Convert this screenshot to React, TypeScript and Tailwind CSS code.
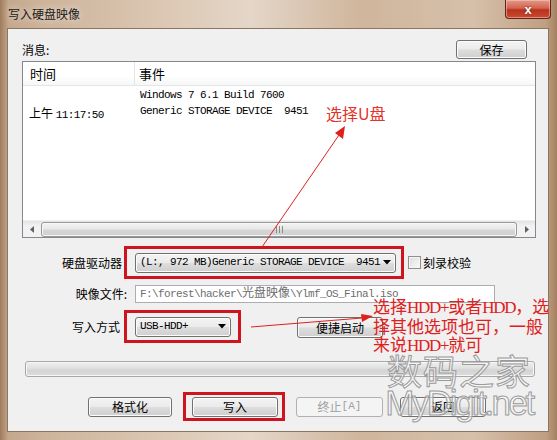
const mono = "font-['Liberation_Mono','Noto_Sans_CJK_SC',monospace] text-[11px] tracking-[-0.6px]";
const lat = "font-['Liberation_Serif',serif] tracking-[-1.3px]";

function WinButton({ children, className = "", disabled = false }: { children: React.ReactNode; className?: string; disabled?: boolean }) {
  return (
    <div
      className={
        "flex items-center justify-center rounded-[3px] border text-[12px] leading-none " +
        (disabled
          ? "border-[#adb2b5] bg-[#f4f4f4] text-[#a0a0a0] "
          : "border-[#707070] bg-[linear-gradient(180deg,#f4f4f4_0%,#ebebeb_48%,#dddddd_52%,#cfcfcf_100%)] text-black shadow-[inset_0_0_0_1px_#fcfcfc] ") +
        className
      }
    >
      {children}
    </div>
  );
}

function Combo({ children, className = "" }: { children: React.ReactNode; className?: string }) {
  return (
    <div
      className={
        "flex items-center justify-between rounded-[3px] border border-[#707070] bg-[linear-gradient(180deg,#f4f4f4_0%,#ebebeb_48%,#dddddd_52%,#cfcfcf_100%)] shadow-[inset_0_0_0_1px_#fcfcfc] pl-[4px] pr-[4px] " +
        className
      }
    >
      <span className={mono + " whitespace-pre text-black"}>{children}</span>
      <svg width="8" height="5" viewBox="0 0 8 5">
        <path d="M0 0 L8 0 L4 4.5 Z" fill="#000" />
      </svg>
    </div>
  );
}

export default function App() {
  return (
    <div className="relative w-[557px] h-[440px] overflow-hidden flex flex-col font-['Noto_Sans_CJK_SC',sans-serif] bg-[linear-gradient(90deg,#9f7b5c_0%,#c4a88d_1.5%,#cdb49b_8%,#dcc8b4_30%,#e4d6c8_45%,#cfb59c_65%,#d6c0aa_85%,#c09f82_98%,#a3805f_100%)]">
      {/* Title bar */}
      <div className="h-[28px] flex items-start justify-between">
        <div className="ml-[8px] mt-[5px] text-[12px] leading-[18px] text-[#1a1a1a] [text-shadow:0_0_6px_#f2e9df]">写入硬盘映像</div>
        <div className="mr-[6px] w-[46px] h-[19px] rounded-b-[4px] border border-t-0 border-[#5e2418] bg-[linear-gradient(180deg,#e09a8a_0%,#d4634f_45%,#b8321e_55%,#c94b33_100%)] flex items-center justify-center shadow-[inset_0_0_0_1px_rgba(255,210,200,0.5)]">
          <span className="text-white font-bold text-[13px] leading-none font-['Liberation_Sans',sans-serif] [text-shadow:0_0_2px_#5a1a10]">x</span>
        </div>
      </div>

      {/* Client area */}
      <div className="ml-[7px] mr-[8px] h-[404px] bg-[#f0f0f0] border border-[#8b7662] flex flex-col">
        {/* 消息 row */}
        <div className="mt-[11px] pl-[14px] pr-[21px] flex items-center justify-between h-[19px]">
          <span className="text-[12px] text-black leading-none">消息:</span>
          <WinButton className="w-[71px] h-[19px]">保存</WinButton>
        </div>

        {/* List view */}
        <div className="mt-[2px] ml-[14px] w-[514px] h-[177px] border border-[#828790] bg-white flex flex-col">
          <div className="h-[24px] flex border-b border-[#e5e5e5] bg-[linear-gradient(180deg,#ffffff_0%,#ffffff_60%,#f6f7f8_100%)]">
            <div className="w-[112px] border-r border-[#e5e5e5] flex items-center pl-[7px] text-[13px] text-black">时间</div>
            <div className="flex-1 flex items-center pl-[4px] text-[13px] text-black">事件</div>
          </div>
          <div className="flex-1 pt-[1px]">
            <div className="h-[16px] flex items-center">
              <div className="w-[112px]" />
              <div className={mono + " pl-[5px] text-black whitespace-pre"}>Windows 7 6.1 Build 7600</div>
            </div>
            <div className="h-[16px] flex items-center">
              <div className="w-[112px] pl-[6px] text-black whitespace-pre">
                <span className="text-[12px]">上午 </span>
                <span className={mono}>11:17:50</span>
              </div>
              <div className={mono + " pl-[5px] text-black whitespace-pre"}>Generic STORAGE DEVICE  9451</div>
            </div>
          </div>
          {/* Horizontal scrollbar */}
          <div className="h-[17px] flex items-stretch bg-[linear-gradient(180deg,#e3e3e3_0%,#f2f2f2_30%,#f2f2f2_100%)] border-t border-[#f0f0f0]">
            <div className="w-[17px] flex items-center justify-center">
              <svg width="4" height="7" viewBox="0 0 4 7"><path d="M4 0 L0 3.5 L4 7 Z" fill="#606060" /></svg>
            </div>
            <div className="flex-1 flex items-center px-[1px]">
              <div className="h-[15px] w-full rounded-[3px] border border-[#979797] bg-[linear-gradient(180deg,#f3f3f3_0%,#e8e8e8_45%,#d6d6d6_55%,#cfcfcf_100%)] flex items-center justify-center shadow-[inset_0_0_0_1px_#f8f8f8]">
                <div className="flex gap-[2px]">
                  <div className="w-[1px] h-[7px] bg-[#8a8a8a]" />
                  <div className="w-[1px] h-[7px] bg-[#8a8a8a]" />
                  <div className="w-[1px] h-[7px] bg-[#8a8a8a]" />
                </div>
              </div>
            </div>
            <div className="w-[17px] flex items-center justify-center">
              <svg width="4" height="7" viewBox="0 0 4 7"><path d="M0 0 L4 3.5 L0 7 Z" fill="#606060" /></svg>
            </div>
          </div>
        </div>

        {/* Drive row */}
        <div className="mt-[8px] flex items-center">
          <div className="w-[116px] pr-[2px] text-right text-[12px] text-black">硬盘驱动器</div>
          <div className="w-[280px] h-[33px] border-[3px] border-[#d0141f] flex items-center pl-[8px]">
            <Combo className="w-[261px] h-[20px]">(L:, 972 MB)Generic STORAGE DEVICE  9451</Combo>
          </div>
          <div className="ml-[4px] w-[13px] h-[13px] border border-[#8f8f8f] bg-[linear-gradient(135deg,#dcdcdc_0%,#fbfbfb_100%)] shadow-[inset_0_0_0_1px_#f4f4f4]" />
          <span className="ml-[2px] text-[12px] text-black">刻录校验</span>
        </div>

        {/* Image file row */}
        <div className="mt-[6px] flex items-center">
          <div className="w-[119px] text-right text-[12px] text-black">映像文件:</div>
          <div className="ml-[8px] w-[360px] h-[18px] border border-[#abadb3] bg-white flex items-center pl-[4px] overflow-hidden">
            <span className={mono + " whitespace-pre text-[#6d6d6d]"}>
              F:\forest\hacker\<span className="text-[12px] tracking-normal">光盘映像</span>\Ylmf_OS_Final.iso
            </span>
          </div>
        </div>

        {/* Write mode row */}
        <div className="mt-[7px] flex items-center">
          <div className="w-[116px] pr-[4px] text-right text-[12px] text-black">写入方式</div>
          <div className="w-[117px] h-[33px] border-[3px] border-[#d0141f] flex items-center pl-[8px]">
            <Combo className="w-[96px] h-[20px]">USB-HDD+</Combo>
          </div>
          <WinButton className="ml-[56px] w-[86px] h-[21px] mt-[2px]">便捷启动</WinButton>
        </div>

        {/* Progress bar */}
        <div className="mt-[18px] ml-[17px] w-[510px] h-[16px] rounded-[3px] border border-[#a7a7a7] bg-[linear-gradient(180deg,#f0f0f0_0%,#e2e2e2_40%,#d4d4d4_60%,#dcdcdc_100%)] shadow-[inset_0_0_0_1px_#f6f6f6]" />

        {/* Buttons row */}
        <div className="mt-[15px] flex items-center">
          <WinButton className="ml-[80px] w-[84px] h-[20px]">格式化</WinButton>
          <div className="ml-[11px] w-[102px] h-[29px] border-[3px] border-[#d0141f] flex items-center pl-[6px]">
            <WinButton className="w-[86px] h-[20px]">写入</WinButton>
          </div>
          <WinButton disabled className="ml-[11px] w-[87px] h-[20px]">
            终止<span className="font-['Liberation_Mono',monospace] text-[11px]">[A]</span>
          </WinButton>
          <WinButton className="ml-[17px] w-[86px] h-[20px] border-[#303030]">返回</WinButton>
        </div>
      </div>

      {/* Watermark */}
      <div className="absolute left-[384px] top-[350px] w-[150px] flex flex-col items-center pointer-events-none">
        <div className="text-[35px] leading-[40px] font-normal tracking-[1px] text-[rgba(250,250,250,0.6)] [-webkit-text-stroke:1px_#9a9a9a]">数码之家</div>
        <div className="-mt-[5px] text-[35px] leading-[36px] tracking-[-2.5px] font-['Liberation_Sans',sans-serif] text-[rgba(250,250,250,0.6)] [-webkit-text-stroke:1px_#9a9a9a]">MyDigit.net</div>
      </div>

      {/* Annotation: 选择U盘 */}
      <div className="absolute left-[326px] top-[104px] text-[16px] leading-[18px] text-[#e4322a] pointer-events-none">选择U盘</div>

      {/* Annotation: HDD text */}
      <div className="absolute left-[373px] top-[297px] text-[17px] leading-[18px] text-[#e0201c] whitespace-nowrap pointer-events-none">
        <div>选择<span className={lat}>HDD+</span>或者<span className={lat}>HDD</span>，选</div>
        <div>择其他选项也可，一般</div>
        <div>来说<span className={lat}>HDD+</span>就可</div>
      </div>

      {/* Arrows */}
      <svg className="absolute left-0 top-0 pointer-events-none" width="557" height="440" viewBox="0 0 557 440">
        <line x1="262" y1="247" x2="339" y2="135" stroke="#e0201c" strokeWidth="1" />
        <path d="M345 126 L343 139 L335 133 Z" fill="#e0201c" />
        <line x1="251" y1="327" x2="362" y2="318" stroke="#e0201c" strokeWidth="1" />
        <path d="M373 316 L362 322 L361 314 Z" fill="#e0201c" />
      </svg>
    </div>
  );
}
